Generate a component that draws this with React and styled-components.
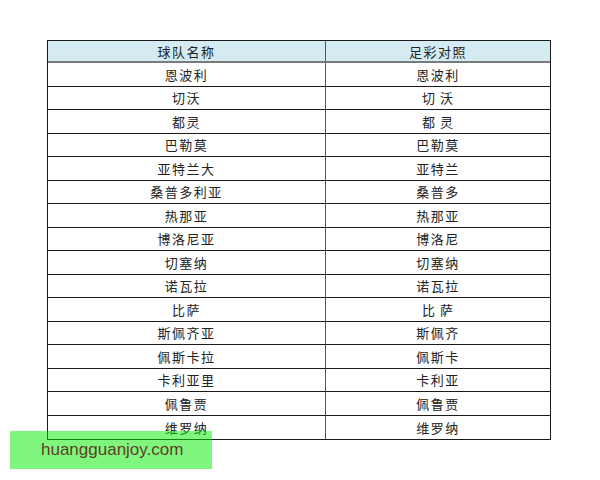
import React from "react";
import styled, { createGlobalStyle } from "styled-components";

const Global = createGlobalStyle`
  html, body { margin: 0; padding: 0; background: #fff; }
  body { width: 600px; height: 480px; overflow: hidden; }
`;

const Page = styled.div`
  position: relative;
  width: 600px;
  height: 480px;
  padding: 40px 0 0 47px;
  box-sizing: border-box;
  font-family: "Noto Sans CJK SC", "Noto Sans", sans-serif;
`;

const Table = styled.div`
  width: 504px;
  display: grid;
  grid-template-columns: 278px 1fr;
  border: 1px solid #1a1a1a;
  box-sizing: border-box;
`;

const Cell = styled.div`
  height: ${(p) => (p.$head ? "22px" : "23.5px")};
  display: flex;
  align-items: center;
  justify-content: center;
  font-size: 13px;
  letter-spacing: ${(p) => p.$spacing || "1.5px"};
  color: #222;
  background: ${(p) => (p.$head ? "#d3ebf1" : "#fff")};
  border-right: ${(p) => (p.$left ? "1px solid #555" : "none")};
  border-bottom: ${(p) =>
    p.$last ? "none" : p.$head ? "2px solid #7a7a7a" : "1px solid #1a1a1a"};
  box-sizing: border-box;
  line-height: 1;
`;

const Watermark = styled.div`
  position: absolute;
  left: 10px;
  top: 431px;
  width: 202px;
  height: 38px;
  background: rgba(0, 240, 0, 0.5);
  color: #5e3e22;
  font-family: "Liberation Sans", Arial, sans-serif;
  font-size: 17px;
  display: flex;
  align-items: center;
  padding-left: 31px;
  box-sizing: border-box;
`;

const rows = [
  ["恩波利", "恩波利"],
  ["切沃", "切 沃"],
  ["都灵", "都 灵"],
  ["巴勒莫", "巴勒莫"],
  ["亚特兰大", "亚特兰"],
  ["桑普多利亚", "桑普多"],
  ["热那亚", "热那亚"],
  ["博洛尼亚", "博洛尼"],
  ["切塞纳", "切塞纳"],
  ["诺瓦拉", "诺瓦拉"],
  ["比萨", "比 萨"],
  ["斯佩齐亚", "斯佩齐"],
  ["佩斯卡拉", "佩斯卡"],
  ["卡利亚里", "卡利亚"],
  ["佩鲁贾", "佩鲁贾"],
  ["维罗纳", "维罗纳"],
];

export default function App() {
  return (
    <>
      <Global />
      <Page>
        <Table>
          <Cell $head $left>球队名称</Cell>
          <Cell $head>足彩对照</Cell>
          {rows.map(([a, b], i) => (
            <React.Fragment key={i}>
              <Cell $left $last={i === rows.length - 1}>{a}</Cell>
              <Cell $last={i === rows.length - 1} $spacing={b.includes(" ") ? "1px" : "1.5px"}>
                {b}
              </Cell>
            </React.Fragment>
          ))}
        </Table>
        <Watermark>huangguanjoy.com</Watermark>
      </Page>
    </>
  );
}
